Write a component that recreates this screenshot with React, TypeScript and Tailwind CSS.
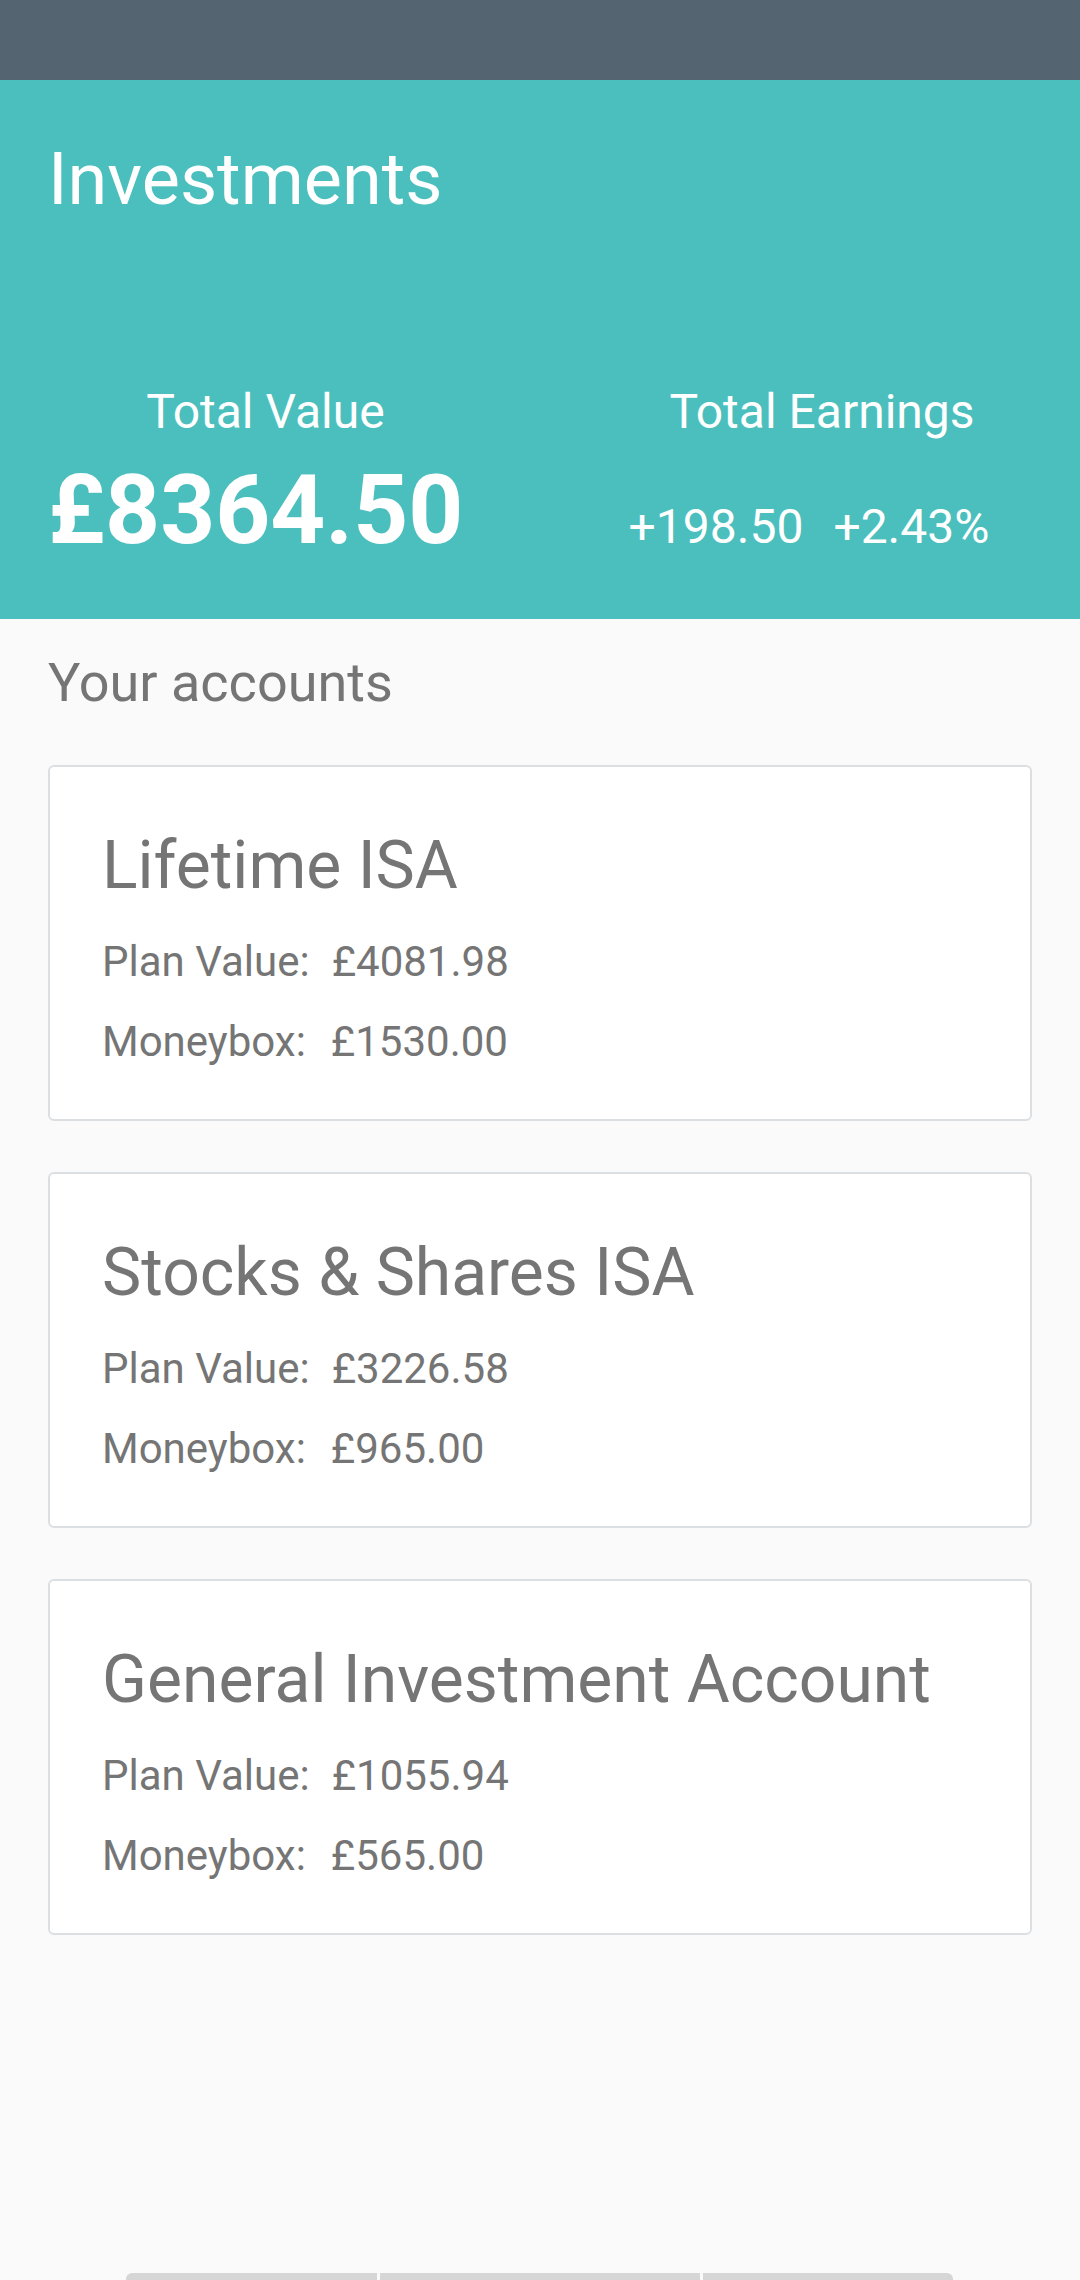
import React from "react";

const accounts = [
  { name: "Lifetime ISA", planValue: "£4081.98", moneybox: "£1530.00" },
  { name: "Stocks & Shares ISA", planValue: "£3226.58", moneybox: "£965.00" },
  { name: "General Investment Account", planValue: "£1055.94", moneybox: "£565.00" },
];

function AccountCard({ name, planValue, moneybox }: { name: string; planValue: string; moneybox: string }) {
  return (
    <div className="h-[356px] bg-white border-2 border-[#dcdfe2] rounded-[6px] pl-[52px] pt-[66px] text-[#757575]">
      <h2 className="text-[66px] leading-none">{name}</h2>
      <div className="mt-[42px] text-[42px] leading-none flex">
        <span>Plan Value:</span>
        <span className="ml-[22px]">{planValue}</span>
      </div>
      <div className="mt-[38px] text-[42px] leading-none flex">
        <span>Moneybox:</span>
        <span className="ml-[25px]">{moneybox}</span>
      </div>
    </div>
  );
}

export default function App() {
  return (
    <div className="w-[1080px] min-h-[2280px] flex flex-col bg-[#fafafa] font-['Roboto',sans-serif]">
      <div className="h-[80px] bg-[#546470]"></div>

      <div className="bg-[#4bbfbd] text-white px-[48px] pt-[64px] pb-[61px]">
        <h1 className="text-[72px] leading-none">Investments</h1>

        <div className="mt-[172px] grid grid-cols-[420px_450px] gap-x-[122px] gap-y-[26px] items-baseline">
          <div className="text-center text-[48px] leading-none pl-[15px]">Total Value</div>
          <div className="text-center text-[48px] leading-none pl-[14px]">Total Earnings</div>
          <div className="text-center text-[96px] leading-none font-bold pr-[6px]">£8364.50</div>
          <div className="flex justify-center gap-[30px] text-[48px] leading-none pr-[12px]">
            <span>+198.50</span>
            <span>+2.43%</span>
          </div>
        </div>
      </div>

      <div className="px-[48px] pt-[37px]">
        <h3 className="text-[54px] leading-none text-[#757575]">Your accounts</h3>
        <div className="mt-[55px] flex flex-col gap-[51px]">
          {accounts.map((a, index) => (
            <AccountCard key={index} name={a.name} planValue={a.planValue} moneybox={a.moneybox} />
          ))}
        </div>
      </div>

      <div className="mt-auto flex gap-[3px] pl-[126px]">
        <div className="h-[7px] w-[251px] bg-[#d6d6d6] rounded-tl-[6px]"></div>
        <div className="h-[7px] w-[320px] bg-[#d6d6d6]"></div>
        <div className="h-[7px] w-[250px] bg-[#d6d6d6] rounded-tr-[6px]"></div>
      </div>
    </div>
  );
}
